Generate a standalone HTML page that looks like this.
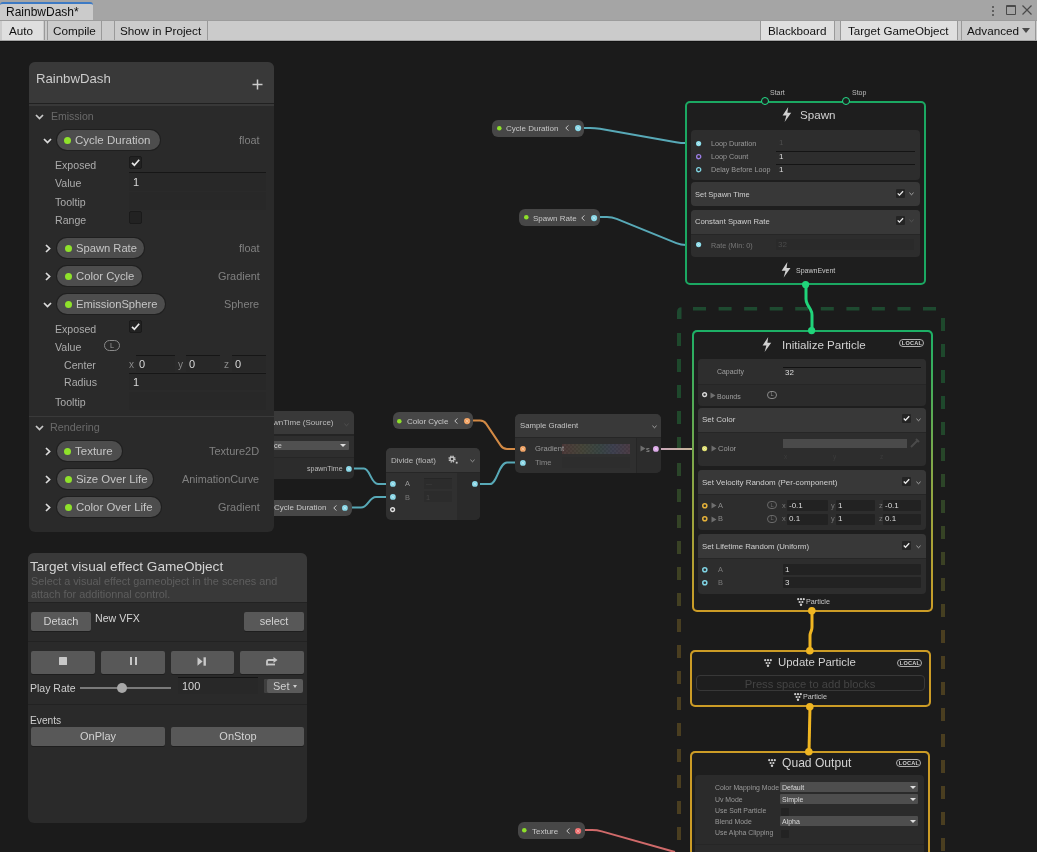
<!DOCTYPE html>
<html><head><meta charset="utf-8"><style>
*{box-sizing:border-box;margin:0;padding:0}
html,body{width:1037px;height:852px;overflow:hidden;background:#1b1b1b;font-family:"Liberation Sans",sans-serif;position:relative}
.a{position:absolute}
.t{position:absolute;white-space:nowrap;line-height:1;will-change:transform}
svg{position:absolute;overflow:visible}
</style></head><body>
<div class="a" style="left:0px;top:0px;width:1037px;height:20px;background:#a5a5a5;"></div>
<div class="a" style="left:0px;top:2px;width:93px;height:18px;background:#cbcbcb;border-radius:3px 3px 0 0;border-top:2px solid #3d7ac4"></div>
<div class="t" style="left:6.0px;top:5.8px;font-size:12px;color:#0d0d0d;">RainbwDash*</div>
<div class="a" style="left:0px;top:20px;width:1037px;height:1px;background:#9c9c9c;"></div>
<div class="a" style="left:0px;top:21px;width:1037px;height:19px;background:#cbcbcb;"></div>
<div class="a" style="left:0px;top:40px;width:1037px;height:1px;background:#a4a4a4;"></div>
<div class="a" style="left:0px;top:41px;width:1037px;height:1px;background:#121212;"></div>
<div class="a" style="left:2px;top:21px;width:41px;height:19px;background:#dfdfdf;"></div>
<div class="t" style="left:9.0px;top:24.6px;font-size:11.7px;color:#111;">Auto</div>
<div class="a" style="left:44px;top:21px;width:1px;height:19px;background:#999;"></div>
<div class="a" style="left:47px;top:21px;width:1px;height:19px;background:#999;"></div>
<div class="t" style="left:53.0px;top:24.6px;font-size:11.7px;color:#111;">Compile</div>
<div class="a" style="left:101px;top:21px;width:1px;height:19px;background:#999;"></div>
<div class="a" style="left:114px;top:21px;width:1px;height:19px;background:#999;"></div>
<div class="t" style="left:120.0px;top:24.6px;font-size:11.7px;color:#111;">Show in Project</div>
<div class="a" style="left:207px;top:21px;width:1px;height:19px;background:#999;"></div>
<div class="a" style="left:760px;top:21px;width:1px;height:19px;background:#999;"></div>
<div class="a" style="left:761px;top:21px;width:73px;height:19px;background:#dfdfdf;"></div>
<div class="t" style="left:768.0px;top:24.6px;font-size:11.7px;color:#111;">Blackboard</div>
<div class="a" style="left:834px;top:21px;width:1px;height:19px;background:#999;"></div>
<div class="a" style="left:840px;top:21px;width:1px;height:19px;background:#999;"></div>
<div class="a" style="left:841px;top:21px;width:116px;height:19px;background:#dfdfdf;"></div>
<div class="t" style="left:848.0px;top:24.7px;font-size:11.6px;color:#111;">Target GameObject</div>
<div class="a" style="left:957px;top:21px;width:1px;height:19px;background:#999;"></div>
<div class="a" style="left:961px;top:21px;width:1px;height:19px;background:#999;"></div>
<div class="t" style="left:967.0px;top:24.6px;font-size:11.7px;color:#111;">Advanced</div>
<div class="a" style="left:1022px;top:28px;width:0;height:0;border-left:4px solid transparent;border-right:4px solid transparent;border-top:5px solid #4a4a4a"></div>
<div class="a" style="left:1035px;top:21px;width:1px;height:19px;background:#999;"></div>
<div class="a" style="left:992.2px;top:5.6px;width:2px;height:2px;background:#4a4a4a;border-radius:1px"></div>
<div class="a" style="left:992.2px;top:9.8px;width:2px;height:2px;background:#4a4a4a;border-radius:1px"></div>
<div class="a" style="left:992.2px;top:14px;width:2px;height:2px;background:#4a4a4a;border-radius:1px"></div>
<div class="a" style="left:1006px;top:5.3px;width:9.6px;height:9.4px;border:1px solid #4a4a4a;border-top-width:2px;border-radius:1px"></div>
<svg style="left:1021px;top:4px" width="12" height="12"><path d="M1.5 1.5L10.5 10.5M10.5 1.5L1.5 10.5" stroke="#4a4a4a" stroke-width="1.2"/></svg>
<div class="a" style="left:0px;top:42px;width:1037px;height:810px;background:#1b1b1b;"></div>
<svg style="left:0;top:0" width="1037" height="852"><path d="M677 319 L677 312 Q677 307.3 681.5 307.3 L681.5 319 Z" fill="#1e4a30"/><rect x="677" y="333" width="4" height="13" fill="#1e482c"/><rect x="677" y="359" width="4" height="13" fill="#1e482c"/><rect x="677" y="385" width="4" height="13" fill="#1e482c"/><rect x="677" y="411" width="4" height="13" fill="#20482b"/><rect x="677" y="437" width="4" height="13" fill="#25462a"/><rect x="677" y="463" width="4" height="13" fill="#2a4529"/><rect x="677" y="489" width="4" height="13" fill="#2f4427"/><rect x="677" y="515" width="4" height="13" fill="#344326"/><rect x="677" y="541" width="4" height="13" fill="#394225"/><rect x="677" y="567" width="4" height="13" fill="#3e4123"/><rect x="677" y="593" width="4" height="13" fill="#434022"/><rect x="677" y="619" width="4" height="13" fill="#483e21"/><rect x="677" y="645" width="4" height="13" fill="#4a3e20"/><rect x="677" y="671" width="4" height="13" fill="#4a3e20"/><rect x="677" y="697" width="4" height="13" fill="#4a3e20"/><rect x="677" y="723" width="4" height="13" fill="#4a3e20"/><rect x="677" y="749" width="4" height="13" fill="#4a3e20"/><rect x="677" y="775" width="4" height="13" fill="#4a3e20"/><rect x="677" y="801" width="4" height="13" fill="#4a3e20"/><rect x="677" y="827" width="4" height="13" fill="#4a3e20"/><rect x="693.0" y="307" width="13" height="3.5" fill="#1e4a30"/><rect x="718.6" y="307" width="13" height="3.5" fill="#1e4a30"/><rect x="744.1" y="307" width="13" height="3.5" fill="#1e4a30"/><rect x="769.7" y="307" width="13" height="3.5" fill="#1e4a30"/><rect x="795.2" y="307" width="13" height="3.5" fill="#1e4a30"/><rect x="820.8" y="307" width="13" height="3.5" fill="#1e4a30"/><rect x="846.4" y="307" width="13" height="3.5" fill="#1e4a30"/><rect x="871.9" y="307" width="13" height="3.5" fill="#1e4a30"/><rect x="897.5" y="307" width="13" height="3.5" fill="#1e4a30"/><rect x="923.0" y="307" width="13" height="3.5" fill="#1e4a30"/><rect x="941" y="318" width="4" height="13" fill="#1e482c"/><rect x="941" y="344" width="4" height="13" fill="#1e482c"/><rect x="941" y="370" width="4" height="13" fill="#1e482c"/><rect x="941" y="396" width="4" height="13" fill="#1e482c"/><rect x="941" y="422" width="4" height="13" fill="#22472b"/><rect x="941" y="448" width="4" height="13" fill="#274629"/><rect x="941" y="474" width="4" height="13" fill="#2c4528"/><rect x="941" y="500" width="4" height="13" fill="#314427"/><rect x="941" y="526" width="4" height="13" fill="#364325"/><rect x="941" y="552" width="4" height="13" fill="#3b4124"/><rect x="941" y="578" width="4" height="13" fill="#404023"/><rect x="941" y="604" width="4" height="13" fill="#453f21"/><rect x="941" y="630" width="4" height="13" fill="#4a3e20"/><rect x="941" y="656" width="4" height="13" fill="#4a3e20"/><rect x="941" y="682" width="4" height="13" fill="#4a3e20"/><rect x="941" y="708" width="4" height="13" fill="#4a3e20"/><rect x="941" y="734" width="4" height="13" fill="#4a3e20"/><rect x="941" y="760" width="4" height="13" fill="#4a3e20"/><rect x="941" y="786" width="4" height="13" fill="#4a3e20"/><rect x="941" y="812" width="4" height="13" fill="#4a3e20"/><rect x="941" y="838" width="4" height="13" fill="#4a3e20"/><path d="M581 128 L590.00 128.00 Q595 128 599.93 128.86 L676.07 142.14 Q681 143 686.00 143.00 L699 143" fill="none" stroke="#58a9b7" stroke-width="2" stroke-linejoin="round"/><path d="M596 217 L607.00 217.00 Q612 217 616.63 218.88 L676.37 243.12 Q681 245 686.00 245.00 L699 245" fill="none" stroke="#58a9b7" stroke-width="2" stroke-linejoin="round"/><path d="M351 468.6 L364 468.6 C370 468.6 371 484 378 484 L393 484" fill="none" stroke="#58a9b7" stroke-width="2" stroke-linejoin="round"/><path d="M348 507.6 L361 507.6 C368 507.6 369 497 376 497 L393 497" fill="none" stroke="#58a9b7" stroke-width="2" stroke-linejoin="round"/><path d="M470 420.5 L480.00 420.50 Q484 420.5 486.22 423.83 L500.78 445.67 Q503 449 507.00 449.00 L523 449" fill="none" stroke="#d38a45" stroke-width="2" stroke-linejoin="round"/><path d="M478 484 L490 484 C497 484 499 462.5 507 462.5 L523 462.5" fill="none" stroke="#58a9b7" stroke-width="2" stroke-linejoin="round"/><defs><linearGradient id="pg" x1="0" x2="1"><stop offset="0" stop-color="#c9a6bb"/><stop offset="1" stop-color="#c8bd8c"/></linearGradient></defs><rect x="659" y="448" width="47" height="2" fill="url(#pg)"/><path d="M806 284 L806.00 299.00 Q806 302 807.54 304.57 L810.46 309.43 Q812 312 812.00 315.00 L812 331" fill="none" stroke="#20d47a" stroke-width="3" stroke-linejoin="round"/><path d="M812 611 L812.00 627.00 Q812 629 811.26 630.86 L810.74 632.14 Q810 634 810.00 636.00 L810 651" fill="none" stroke="#f0b622" stroke-width="3" stroke-linejoin="round"/><path d="M810 706 L809 752" fill="none" stroke="#f0b622" stroke-width="3" stroke-linejoin="round"/><path d="M581 830 L592.00 830.00 Q597 830 601.81 831.36 L675 852" fill="none" stroke="#d06a6a" stroke-width="2" stroke-linejoin="round"/></svg>
<div class="a" style="left:492px;top:119.5px;width:92.29999999999995px;height:17px;background:#474747;border-radius:6px"></div>
<svg style="left:495.70px;top:124.80px" width="6.60" height="6.60"><circle cx="3.30" cy="3.30" r="2.30" fill="#8ee02a"/></svg>
<div class="t" style="left:506.0px;top:125.0px;font-size:8px;color:#c8c8c8;">Cycle Duration</div>
<svg style="left:565.3px;top:125.1px" width="4" height="6" viewBox="0 0 4 6"><path d="M3.4 0.4 L0.8 3 L3.4 5.6" fill="none" stroke="#c8c8c8" stroke-width="1"/></svg>
<svg style="left:573.90px;top:124.00px" width="8.20" height="8.20"><circle cx="4.10" cy="4.10" r="3.10" fill="#86d6e6"/><path d="M2.39 2.39 L5.80 5.80 M5.80 2.39 L2.39 5.80" stroke="rgba(255,255,255,.4)" stroke-width="0.9"/></svg>
<div class="a" style="left:519px;top:209px;width:81.20000000000005px;height:17px;background:#474747;border-radius:6px"></div>
<svg style="left:522.70px;top:214.30px" width="6.60" height="6.60"><circle cx="3.30" cy="3.30" r="2.30" fill="#8ee02a"/></svg>
<div class="t" style="left:533.0px;top:214.5px;font-size:8px;color:#c8c8c8;">Spawn Rate</div>
<svg style="left:581.2px;top:214.6px" width="4" height="6" viewBox="0 0 4 6"><path d="M3.4 0.4 L0.8 3 L3.4 5.6" fill="none" stroke="#c8c8c8" stroke-width="1"/></svg>
<svg style="left:589.80px;top:213.50px" width="8.20" height="8.20"><circle cx="4.10" cy="4.10" r="3.10" fill="#86d6e6"/><path d="M2.39 2.39 L5.80 5.80 M5.80 2.39 L2.39 5.80" stroke="rgba(255,255,255,.4)" stroke-width="0.9"/></svg>
<div class="a" style="left:392.6px;top:412.4px;width:80.59999999999997px;height:17px;background:#474747;border-radius:6px"></div>
<svg style="left:396.30px;top:417.70px" width="6.60" height="6.60"><circle cx="3.30" cy="3.30" r="2.30" fill="#8ee02a"/></svg>
<div class="t" style="left:406.6px;top:417.9px;font-size:8px;color:#c8c8c8;">Color Cycle</div>
<svg style="left:454.2px;top:418.0px" width="4" height="6" viewBox="0 0 4 6"><path d="M3.4 0.4 L0.8 3 L3.4 5.6" fill="none" stroke="#c8c8c8" stroke-width="1"/></svg>
<svg style="left:462.80px;top:416.90px" width="8.20" height="8.20"><circle cx="4.10" cy="4.10" r="3.10" fill="#f0a060"/><path d="M2.39 2.39 L5.80 5.80 M5.80 2.39 L2.39 5.80" stroke="rgba(255,255,255,.4)" stroke-width="0.9"/></svg>
<div class="a" style="left:517.7px;top:822px;width:66.89999999999998px;height:17px;background:#474747;border-radius:6px"></div>
<svg style="left:521.40px;top:827.30px" width="6.60" height="6.60"><circle cx="3.30" cy="3.30" r="2.30" fill="#8ee02a"/></svg>
<div class="t" style="left:531.7px;top:827.5px;font-size:8px;color:#c8c8c8;">Texture</div>
<svg style="left:565.6px;top:827.6px" width="4" height="6" viewBox="0 0 4 6"><path d="M3.4 0.4 L0.8 3 L3.4 5.6" fill="none" stroke="#c8c8c8" stroke-width="1"/></svg>
<svg style="left:574.20px;top:826.50px" width="8.20" height="8.20"><circle cx="4.10" cy="4.10" r="3.10" fill="#f07070"/><path d="M2.39 2.39 L5.80 5.80 M5.80 2.39 L2.39 5.80" stroke="rgba(255,255,255,.4)" stroke-width="0.9"/></svg>
<div class="a" style="left:685px;top:101px;width:241px;height:184px;border:2px solid #1ba862;border-radius:5px;background:#1e1e1e"></div>
<div class="a" style="left:760.6px;top:97.1px;width:8.4px;height:8.4px;border-radius:50%;border:1.7px solid #22e08a;background:#1e1e1e"></div>
<div class="a" style="left:842px;top:97.1px;width:8.4px;height:8.4px;border-radius:50%;border:1.7px solid #22e08a;background:#1e1e1e"></div>
<div class="t" style="left:770.0px;top:88.7px;font-size:7px;color:#bdbdbd;">Start</div>
<div class="t" style="left:852.0px;top:88.7px;font-size:7px;color:#bdbdbd;">Stop</div>
<svg style="left:781.5px;top:107px" width="10.0" height="15" viewBox="0 0 10 15"><path d="M6.2 0 L0.6 8.4 L4.4 8.4 L2.6 15 L9.2 5.8 L5.4 5.8 Z" fill="#d0d0d0"/></svg>
<div class="t" style="left:800.3px;top:109.4px;font-size:11.6px;color:#d2d2d2;">Spawn</div>
<div class="a" style="left:691px;top:129.5px;width:229px;height:50px;background:#2d2d2d;border-radius:4px"></div>
<svg style="left:695.40px;top:139.60px" width="7.20" height="7.20"><circle cx="3.60" cy="3.60" r="2.60" fill="#8adcea"/><path d="M2.17 2.17 L5.03 5.03 M5.03 2.17 L2.17 5.03" stroke="rgba(255,255,255,.4)" stroke-width="0.9"/></svg>
<svg style="left:695.30px;top:152.60px" width="7.40" height="7.40"><circle cx="3.70" cy="3.70" r="2.05" fill="none" stroke="#9c7ee6" stroke-width="1.3"/></svg>
<svg style="left:695.30px;top:165.80px" width="7.40" height="7.40"><circle cx="3.70" cy="3.70" r="2.05" fill="none" stroke="#7fd2e0" stroke-width="1.3"/></svg>
<div class="t" style="left:711.0px;top:140.3px;font-size:7.2px;color:#9a9a9a;">Loop Duration</div>
<div class="t" style="left:711.0px;top:152.5px;font-size:7.2px;color:#9a9a9a;">Loop Count</div>
<div class="t" style="left:711.0px;top:165.7px;font-size:7.2px;color:#9a9a9a;">Delay Before Loop</div>
<div class="t" style="left:779.0px;top:139.4px;font-size:8px;color:#4d4d4d;">1</div>
<div class="a" style="left:776px;top:151px;width:139px;height:1px;background:#141414;"></div>
<div class="a" style="left:776px;top:164.4px;width:139px;height:1px;background:#141414;"></div>
<div class="t" style="left:779.0px;top:152.6px;font-size:8px;color:#dcdcdc;">1</div>
<div class="t" style="left:779.0px;top:165.8px;font-size:8px;color:#dcdcdc;">1</div>
<div class="a" style="left:691px;top:182.3px;width:229px;height:23.5px;background:#383838;border-radius:4px"></div>
<div class="t" style="left:694.5px;top:191.0px;font-size:7.5px;color:#cfcfcf;">Set Spawn Time</div>
<div class="a" style="left:896px;top:189.3px;width:8.6px;height:8.6px;background:#242424;border-radius:1px"></div>
<svg style="left:896px;top:189.3px" width="8.6" height="8.6" viewBox="0 0 9 9"><path d="M1.8 4.6 L3.6 6.4 L7.4 2.4" fill="none" stroke="#e8e8e8" stroke-width="1.4"/></svg>
<svg style="left:909px;top:191.5px" width="5" height="3.5" viewBox="0 0 6 4"><path d="M0.5 0.8 L3 3.2 L5.5 0.8" fill="none" stroke="#bdbdbd" stroke-width="1"/></svg>
<div class="a" style="left:691px;top:209.8px;width:229px;height:47px;background:#2d2d2d;border-radius:4px;overflow:hidden"></div>
<div class="a" style="left:691px;top:209.8px;width:229px;height:23.8px;background:#383838;border-radius:4px 4px 0 0"></div>
<div class="a" style="left:691px;top:233.6px;width:229px;height:1.2px;background:#262626;"></div>
<div class="t" style="left:694.5px;top:217.9px;font-size:7.7px;color:#cfcfcf;">Constant Spawn Rate</div>
<div class="a" style="left:896px;top:216.4px;width:8.6px;height:8.6px;background:#242424;border-radius:1px"></div>
<svg style="left:896px;top:216.4px" width="8.6" height="8.6" viewBox="0 0 9 9"><path d="M1.8 4.6 L3.6 6.4 L7.4 2.4" fill="none" stroke="#e8e8e8" stroke-width="1.4"/></svg>
<svg style="left:909px;top:218.8px" width="5" height="3.5" viewBox="0 0 6 4"><path d="M0.5 0.8 L3 3.2 L5.5 0.8" fill="none" stroke="#5a5a5a" stroke-width="1"/></svg>
<svg style="left:695.40px;top:241.40px" width="7.20" height="7.20"><circle cx="3.60" cy="3.60" r="2.60" fill="#8adcea"/><path d="M2.17 2.17 L5.03 5.03 M5.03 2.17 L2.17 5.03" stroke="rgba(255,255,255,.4)" stroke-width="0.9"/></svg>
<div class="t" style="left:711.0px;top:242.1px;font-size:7.2px;color:#777;">Rate (Min: 0)</div>
<div class="a" style="left:776.4px;top:238.9px;width:137.6px;height:11.4px;background:#2a2a2a;"></div>
<div class="t" style="left:778.0px;top:241.2px;font-size:8px;color:#4a4a4a;">32</div>
<svg style="left:780.5px;top:262px" width="10.3" height="15.5" viewBox="0 0 10 15"><path d="M6.2 0 L0.6 8.4 L4.4 8.4 L2.6 15 L9.2 5.8 L5.4 5.8 Z" fill="#d0d0d0"/></svg>
<div class="t" style="left:795.7px;top:266.5px;font-size:7.0px;color:#c8c8c8;">SpawnEvent</div>
<svg style="left:801.00px;top:279.70px" width="9.20" height="9.20"><circle cx="4.60" cy="4.60" r="3.60" fill="#20d47a"/></svg>
<div class="a" style="left:691.8px;top:330.2px;width:240.80000000000007px;height:281.8px;border-radius:5px;background:linear-gradient(#1cb066 0%, #85a848 50%, #cc9c26 100%)"></div>
<div class="a" style="left:693.8px;top:332.2px;width:236.80000000000007px;height:277.8px;border-radius:3.5px;background:#1e1e1e"></div>
<svg style="left:807.40px;top:326.40px" width="9.20" height="9.20"><circle cx="4.60" cy="4.60" r="3.60" fill="#20d47a"/></svg>
<svg style="left:762px;top:336.5px" width="10.0" height="15" viewBox="0 0 10 15"><path d="M6.2 0 L0.6 8.4 L4.4 8.4 L2.6 15 L9.2 5.8 L5.4 5.8 Z" fill="#d0d0d0"/></svg>
<div class="t" style="left:782.0px;top:339.4px;font-size:11.6px;color:#d2d2d2;">Initialize Particle</div>
<div class="a" style="left:899px;top:338.8px;width:25px;height:8px;border:1px solid #b0b0b0;border-radius:4px"></div>
<div class="t" style="left:611.5px;width:600px;text-align:center;top:340.7px;font-size:5.6px;color:#d0d0d0;font-weight:bold;letter-spacing:0.2px">LOCAL</div>
<div class="a" style="left:698px;top:359px;width:228px;height:46.6px;background:#2b2b2b;border-radius:4px;overflow:hidden"></div>
<div class="a" style="left:698px;top:359px;width:228px;height:25px;background:#2e2e2e;border-radius:4px 4px 0 0"></div>
<div class="a" style="left:698px;top:384px;width:228px;height:1px;background:#262626;"></div>
<div class="t" style="left:717.0px;top:369.3px;font-size:6.95px;color:#a0a0a0;">Capacity</div>
<div class="a" style="left:783px;top:367px;width:138px;height:1px;background:#121212;"></div>
<div class="t" style="left:784.5px;top:368.8px;font-size:8px;color:#dcdcdc;">32</div>
<svg style="left:701.40px;top:391.40px" width="7.20" height="7.20"><circle cx="3.60" cy="3.60" r="1.90" fill="none" stroke="#d8d8d8" stroke-width="1.4"/></svg>
<svg style="left:710px;top:391.5px" width="6" height="7" viewBox="0 0 6 7"><path d="M0.5 0.5 L5.5 3.5 L0.5 6.5 Z" fill="#6f6f6f"/></svg>
<div class="t" style="left:717.0px;top:392.5px;font-size:7.0px;color:#a0a0a0;">Bounds</div>
<div class="a" style="left:767px;top:390.8px;width:10px;height:8.2px;border:1px solid #8a8a8a;border-radius:4.1px"></div>
<div class="t" style="left:472.1px;width:600px;text-align:center;top:392.4px;font-size:5.8px;color:#8a8a8a;">L</div>
<div class="a" style="left:698px;top:408px;width:228px;height:58px;background:#2d2d2d;border-radius:4px;overflow:hidden"></div>
<div class="a" style="left:698px;top:408px;width:228px;height:24px;background:#383838;border-radius:4px 4px 0 0"></div>
<div class="a" style="left:698px;top:432px;width:228px;height:1px;background:#262626;"></div>
<div class="t" style="left:702.0px;top:416.2px;font-size:8px;color:#cfcfcf;">Set Color</div>
<div class="a" style="left:902px;top:414px;width:8.8px;height:8.8px;background:#242424;border-radius:1px"></div>
<svg style="left:902px;top:414px" width="8.8" height="8.8" viewBox="0 0 9 9"><path d="M1.8 4.6 L3.6 6.4 L7.4 2.4" fill="none" stroke="#e8e8e8" stroke-width="1.4"/></svg>
<svg style="left:915.5px;top:417.5px" width="5" height="3.5" viewBox="0 0 6 4"><path d="M0.5 0.8 L3 3.2 L5.5 0.8" fill="none" stroke="#bdbdbd" stroke-width="1"/></svg>
<svg style="left:701.40px;top:444.90px" width="7.20" height="7.20"><circle cx="3.60" cy="3.60" r="2.60" fill="#e0e070"/><path d="M2.17 2.17 L5.03 5.03 M5.03 2.17 L2.17 5.03" stroke="rgba(255,255,255,.4)" stroke-width="0.9"/></svg>
<svg style="left:711px;top:445.0px" width="6" height="7" viewBox="0 0 6 7"><path d="M0.5 0.5 L5.5 3.5 L0.5 6.5 Z" fill="#6f6f6f"/></svg>
<div class="t" style="left:718.0px;top:444.9px;font-size:7.6px;color:#9a9a9a;">Color</div>
<div class="a" style="left:783px;top:439px;width:124px;height:8.5px;background:#4a4a4a;"></div>
<svg style="left:909px;top:437px" width="12" height="12"><path d="M2 10 L8 4 M7 2 L10 5" stroke="#4a4a4a" stroke-width="2"/></svg>
<div class="t" style="left:784.0px;top:453.5px;font-size:6.5px;color:#3c3c3c;">x</div>
<div class="t" style="left:833.0px;top:453.5px;font-size:6.5px;color:#3c3c3c;">y</div>
<div class="t" style="left:880.0px;top:453.5px;font-size:6.5px;color:#3c3c3c;">z</div>
<div class="a" style="left:698px;top:470px;width:228px;height:60.4px;background:#2d2d2d;border-radius:4px;overflow:hidden"></div>
<div class="a" style="left:698px;top:470px;width:228px;height:24.2px;background:#383838;border-radius:4px 4px 0 0"></div>
<div class="a" style="left:698px;top:494.2px;width:228px;height:1px;background:#262626;"></div>
<div class="t" style="left:702.0px;top:479.3px;font-size:7.94px;color:#cfcfcf;">Set Velocity Random (Per-component)</div>
<div class="a" style="left:902px;top:477px;width:8.8px;height:8.8px;background:#242424;border-radius:1px"></div>
<svg style="left:902px;top:477px" width="8.8" height="8.8" viewBox="0 0 9 9"><path d="M1.8 4.6 L3.6 6.4 L7.4 2.4" fill="none" stroke="#e8e8e8" stroke-width="1.4"/></svg>
<svg style="left:915.5px;top:480.5px" width="5" height="3.5" viewBox="0 0 6 4"><path d="M0.5 0.8 L3 3.2 L5.5 0.8" fill="none" stroke="#bdbdbd" stroke-width="1"/></svg>
<svg style="left:701.20px;top:501.70px" width="7.60" height="7.60"><circle cx="3.80" cy="3.80" r="2.05" fill="none" stroke="#e6b23a" stroke-width="1.5"/></svg>
<svg style="left:711px;top:502.0px" width="6" height="7" viewBox="0 0 6 7"><path d="M0.5 0.5 L5.5 3.5 L0.5 6.5 Z" fill="#6f6f6f"/></svg>
<div class="t" style="left:718.0px;top:501.9px;font-size:7.4px;color:#8a8a8a;">A</div>
<div class="a" style="left:767px;top:501.1px;width:10px;height:8.2px;border:1px solid #6a6a6a;border-radius:4.1px"></div>
<div class="t" style="left:472.1px;width:600px;text-align:center;top:502.7px;font-size:5.8px;color:#6a6a6a;">L</div>
<div class="a" style="left:787px;top:500.0px;width:41px;height:11px;background:#222222;border-radius:1px"></div>
<div class="t" style="left:781.5px;top:501.9px;font-size:7.4px;color:#777;">x</div>
<div class="t" style="left:789.0px;top:501.7px;font-size:8px;color:#dcdcdc;">-0.1</div>
<div class="a" style="left:836px;top:500.0px;width:39px;height:11px;background:#222222;border-radius:1px"></div>
<div class="t" style="left:831.0px;top:501.9px;font-size:7.4px;color:#777;">y</div>
<div class="t" style="left:838.0px;top:501.7px;font-size:8px;color:#dcdcdc;">1</div>
<div class="a" style="left:883px;top:500.0px;width:38px;height:11px;background:#222222;border-radius:1px"></div>
<div class="t" style="left:878.5px;top:501.9px;font-size:7.4px;color:#777;">z</div>
<div class="t" style="left:885.0px;top:501.7px;font-size:8px;color:#dcdcdc;">-0.1</div>
<svg style="left:701.20px;top:515.20px" width="7.60" height="7.60"><circle cx="3.80" cy="3.80" r="2.05" fill="none" stroke="#e6b23a" stroke-width="1.5"/></svg>
<svg style="left:711px;top:515.5px" width="6" height="7" viewBox="0 0 6 7"><path d="M0.5 0.5 L5.5 3.5 L0.5 6.5 Z" fill="#6f6f6f"/></svg>
<div class="t" style="left:718.0px;top:515.4px;font-size:7.4px;color:#8a8a8a;">B</div>
<div class="a" style="left:767px;top:514.5999999999999px;width:10px;height:8.2px;border:1px solid #6a6a6a;border-radius:4.1px"></div>
<div class="t" style="left:472.1px;width:600px;text-align:center;top:516.2px;font-size:5.8px;color:#6a6a6a;">L</div>
<div class="a" style="left:787px;top:513.5px;width:41px;height:11px;background:#222222;border-radius:1px"></div>
<div class="t" style="left:781.5px;top:515.4px;font-size:7.4px;color:#777;">x</div>
<div class="t" style="left:789.0px;top:515.2px;font-size:8px;color:#dcdcdc;">0.1</div>
<div class="a" style="left:836px;top:513.5px;width:39px;height:11px;background:#222222;border-radius:1px"></div>
<div class="t" style="left:831.0px;top:515.4px;font-size:7.4px;color:#777;">y</div>
<div class="t" style="left:838.0px;top:515.2px;font-size:8px;color:#dcdcdc;">1</div>
<div class="a" style="left:883px;top:513.5px;width:38px;height:11px;background:#222222;border-radius:1px"></div>
<div class="t" style="left:878.5px;top:515.4px;font-size:7.4px;color:#777;">z</div>
<div class="t" style="left:885.0px;top:515.2px;font-size:8px;color:#dcdcdc;">0.1</div>
<div class="a" style="left:698px;top:534px;width:228px;height:59.8px;background:#2d2d2d;border-radius:4px;overflow:hidden"></div>
<div class="a" style="left:698px;top:534px;width:228px;height:24px;background:#383838;border-radius:4px 4px 0 0"></div>
<div class="a" style="left:698px;top:558px;width:228px;height:1px;background:#262626;"></div>
<div class="t" style="left:702.0px;top:543.4px;font-size:7.77px;color:#cfcfcf;">Set Lifetime Random (Uniform)</div>
<div class="a" style="left:902px;top:541px;width:8.8px;height:8.8px;background:#242424;border-radius:1px"></div>
<svg style="left:902px;top:541px" width="8.8" height="8.8" viewBox="0 0 9 9"><path d="M1.8 4.6 L3.6 6.4 L7.4 2.4" fill="none" stroke="#e8e8e8" stroke-width="1.4"/></svg>
<svg style="left:915.5px;top:544.5px" width="5" height="3.5" viewBox="0 0 6 4"><path d="M0.5 0.8 L3 3.2 L5.5 0.8" fill="none" stroke="#bdbdbd" stroke-width="1"/></svg>
<svg style="left:701.20px;top:565.70px" width="7.60" height="7.60"><circle cx="3.80" cy="3.80" r="2.05" fill="none" stroke="#80d4e4" stroke-width="1.5"/></svg>
<div class="t" style="left:718.0px;top:565.9px;font-size:7.4px;color:#7a7a7a;">A</div>
<div class="a" style="left:783px;top:563.5px;width:138px;height:11.5px;background:#222222;border-radius:1px"></div>
<div class="t" style="left:785.0px;top:565.7px;font-size:8px;color:#dcdcdc;">1</div>
<svg style="left:701.20px;top:578.70px" width="7.60" height="7.60"><circle cx="3.80" cy="3.80" r="2.05" fill="none" stroke="#80d4e4" stroke-width="1.5"/></svg>
<div class="t" style="left:718.0px;top:578.9px;font-size:7.4px;color:#7a7a7a;">B</div>
<div class="a" style="left:783px;top:576.5px;width:138px;height:11.5px;background:#222222;border-radius:1px"></div>
<div class="t" style="left:785.0px;top:578.7px;font-size:8px;color:#dcdcdc;">3</div>
<svg style="left:797px;top:598px" width="8" height="8" viewBox="0 0 8 8"><circle cx="1.2" cy="1.2" r="1.1" fill="#d0d0d0"/><circle cx="4" cy="1.2" r="1.1" fill="#d0d0d0"/><circle cx="6.8" cy="1.2" r="1.1" fill="#d0d0d0"/><circle cx="2.6" cy="4" r="1.1" fill="#d0d0d0"/><circle cx="5.4" cy="4" r="1.1" fill="#d0d0d0"/><circle cx="4" cy="6.8" r="1.2" fill="#d0d0d0"/></svg>
<div class="t" style="left:806.0px;top:598.2px;font-size:7.2px;color:#c8c8c8;">Particle</div>
<svg style="left:807.20px;top:606.20px" width="9.60" height="9.60"><circle cx="4.80" cy="4.80" r="3.80" fill="#f0b622"/></svg>
<div class="a" style="left:690px;top:650.2px;width:240.79999999999995px;height:56.89999999999998px;border-radius:5px;background:#cc9c26"></div>
<div class="a" style="left:692px;top:652.2px;width:236.79999999999995px;height:52.89999999999998px;border-radius:3.5px;background:#1e1e1e"></div>
<svg style="left:805.20px;top:646.40px" width="9.60" height="9.60"><circle cx="4.80" cy="4.80" r="3.80" fill="#f0b622"/></svg>
<svg style="left:764px;top:659px" width="8" height="8" viewBox="0 0 8 8"><circle cx="1.2" cy="1.2" r="1.1" fill="#d0d0d0"/><circle cx="4" cy="1.2" r="1.1" fill="#d0d0d0"/><circle cx="6.8" cy="1.2" r="1.1" fill="#d0d0d0"/><circle cx="2.6" cy="4" r="1.1" fill="#d0d0d0"/><circle cx="5.4" cy="4" r="1.1" fill="#d0d0d0"/><circle cx="4" cy="6.8" r="1.2" fill="#d0d0d0"/></svg>
<div class="t" style="left:777.8px;top:656.6px;font-size:11.4px;color:#d2d2d2;">Update Particle</div>
<div class="a" style="left:897px;top:659px;width:25px;height:8px;border:1px solid #b0b0b0;border-radius:4px"></div>
<div class="t" style="left:609.5px;width:600px;text-align:center;top:660.9px;font-size:5.6px;color:#d0d0d0;font-weight:bold;letter-spacing:0.2px">LOCAL</div>
<div class="a" style="left:695.5px;top:675px;width:229px;height:15.5px;border:1px solid #383838;border-radius:4px"></div>
<div class="t" style="left:510.0px;width:600px;text-align:center;top:678.5px;font-size:11.2px;color:#444;">Press space to add blocks</div>
<svg style="left:794px;top:692.5px" width="8" height="8" viewBox="0 0 8 8"><circle cx="1.2" cy="1.2" r="1.1" fill="#d0d0d0"/><circle cx="4" cy="1.2" r="1.1" fill="#d0d0d0"/><circle cx="6.8" cy="1.2" r="1.1" fill="#d0d0d0"/><circle cx="2.6" cy="4" r="1.1" fill="#d0d0d0"/><circle cx="5.4" cy="4" r="1.1" fill="#d0d0d0"/><circle cx="4" cy="6.8" r="1.2" fill="#d0d0d0"/></svg>
<div class="t" style="left:802.5px;top:693.2px;font-size:7.2px;color:#c8c8c8;">Particle</div>
<svg style="left:805.20px;top:701.70px" width="9.60" height="9.60"><circle cx="4.80" cy="4.80" r="3.80" fill="#f0b622"/></svg>
<div class="a" style="left:689.5px;top:750.9px;width:240.5px;height:149.10000000000002px;border-radius:5px;background:#cc9c26"></div>
<div class="a" style="left:691.5px;top:752.9px;width:236.5px;height:145.10000000000002px;border-radius:3.5px;background:#1e1e1e"></div>
<svg style="left:804.20px;top:747.10px" width="9.60" height="9.60"><circle cx="4.80" cy="4.80" r="3.80" fill="#f0b622"/></svg>
<svg style="left:768px;top:759px" width="8" height="8" viewBox="0 0 8 8"><circle cx="1.2" cy="1.2" r="1.1" fill="#d0d0d0"/><circle cx="4" cy="1.2" r="1.1" fill="#d0d0d0"/><circle cx="6.8" cy="1.2" r="1.1" fill="#d0d0d0"/><circle cx="2.6" cy="4" r="1.1" fill="#d0d0d0"/><circle cx="5.4" cy="4" r="1.1" fill="#d0d0d0"/><circle cx="4" cy="6.8" r="1.2" fill="#d0d0d0"/></svg>
<div class="t" style="left:782.3px;top:756.8px;font-size:12.1px;color:#d2d2d2;">Quad Output</div>
<div class="a" style="left:896px;top:759px;width:25px;height:8px;border:1px solid #b0b0b0;border-radius:4px"></div>
<div class="t" style="left:608.5px;width:600px;text-align:center;top:760.9px;font-size:5.6px;color:#d0d0d0;font-weight:bold;letter-spacing:0.2px">LOCAL</div>
<div class="a" style="left:695px;top:774.7px;width:229.3px;height:80px;background:#2b2b2b;border-radius:4px 4px 0 0"></div>
<div class="a" style="left:695px;top:843.5px;width:229.3px;height:1px;background:#262626;"></div>
<div class="t" style="left:715.0px;top:784.7px;font-size:6.9px;color:#9a9a9a;">Color Mapping Mode</div>
<div class="t" style="left:715.0px;top:796.7px;font-size:6.9px;color:#9a9a9a;">Uv Mode</div>
<div class="t" style="left:715.0px;top:807.7px;font-size:6.9px;color:#9a9a9a;">Use Soft Particle</div>
<div class="t" style="left:715.0px;top:818.7px;font-size:6.9px;color:#9a9a9a;">Blend Mode</div>
<div class="t" style="left:715.0px;top:829.7px;font-size:6.9px;color:#9a9a9a;">Use Alpha Clipping</div>
<div class="a" style="left:780.3px;top:782px;width:138px;height:9.5px;background:#4e4e4e;border-radius:1px"></div>
<div class="t" style="left:782.0px;top:783.7px;font-size:7px;color:#d8d8d8;">Default</div>
<div class="a" style="left:910px;top:785.5px;width:0;height:0;border-left:3px solid transparent;border-right:3px solid transparent;border-top:3.5px solid #ddd"></div>
<div class="a" style="left:780.3px;top:794px;width:138px;height:9.5px;background:#4e4e4e;border-radius:1px"></div>
<div class="t" style="left:782.0px;top:795.7px;font-size:7px;color:#d8d8d8;">Simple</div>
<div class="a" style="left:910px;top:797.5px;width:0;height:0;border-left:3px solid transparent;border-right:3px solid transparent;border-top:3.5px solid #ddd"></div>
<div class="a" style="left:780.3px;top:816px;width:138px;height:9.5px;background:#4e4e4e;border-radius:1px"></div>
<div class="t" style="left:782.0px;top:817.7px;font-size:7px;color:#d8d8d8;">Alpha</div>
<div class="a" style="left:910px;top:819.5px;width:0;height:0;border-left:3px solid transparent;border-right:3px solid transparent;border-top:3.5px solid #ddd"></div>
<div class="a" style="left:781px;top:808px;width:8px;height:8px;background:#232323;border-radius:1px"></div>
<div class="a" style="left:781px;top:830px;width:8px;height:8px;background:#232323;border-radius:1px"></div>
<div class="a" style="left:200px;top:411px;width:153.7px;height:68px;background:#2c2c2c;border-radius:5px;overflow:hidden"></div>
<div class="a" style="left:200px;top:411px;width:153.7px;height:23px;background:#393939;border-radius:5px 5px 0 0"></div>
<div class="a" style="left:200px;top:434px;width:153.7px;height:2px;background:#242424;"></div>
<div class="a" style="left:200px;top:436px;width:153.7px;height:21px;background:#2e2e2e;"></div>
<div class="a" style="left:200px;top:457px;width:153.7px;height:1px;background:#262626;"></div>
<div class="t" style="right:703.8px;top:419.2px;font-size:8.0px;color:#bcbcbc;">spawnTime (Source)</div>
<svg style="left:344px;top:422.5px" width="5" height="3.5" viewBox="0 0 6 4"><path d="M0.5 0.8 L3 3.2 L5.5 0.8" fill="none" stroke="#555" stroke-width="1"/></svg>
<div class="a" style="left:200px;top:440.8px;width:148.7px;height:9.4px;background:#505050;border-radius:1px"></div>
<div class="t" style="left:274.0px;top:441.9px;font-size:7.4px;color:#cfcfcf;">ce</div>
<div class="a" style="left:340px;top:444px;width:0;height:0;border-left:3px solid transparent;border-right:3px solid transparent;border-top:3.5px solid #ddd"></div>
<div class="t" style="right:694.8px;top:465.0px;font-size:7.0px;color:#bcbcbc;">spawnTime</div>
<svg style="left:344.70px;top:464.50px" width="7.80" height="7.80"><circle cx="3.90" cy="3.90" r="2.90" fill="#86d6e6"/><path d="M2.30 2.30 L5.50 5.50 M5.50 2.30 L2.30 5.50" stroke="rgba(255,255,255,.4)" stroke-width="0.9"/></svg>
<div class="a" style="left:240px;top:499.5px;width:111.7px;height:16.2px;background:#474747;border-radius:6px"></div>
<div class="t" style="right:711.0px;top:504.4px;font-size:8px;color:#c8c8c8;">Cycle Duration</div>
<svg style="left:333px;top:504.5px" width="4" height="6" viewBox="0 0 4 6"><path d="M3.4 0.4 L0.8 3 L3.4 5.6" fill="none" stroke="#c8c8c8" stroke-width="1"/></svg>
<svg style="left:340.80px;top:503.70px" width="7.80" height="7.80"><circle cx="3.90" cy="3.90" r="2.90" fill="#86d6e6"/><path d="M2.30 2.30 L5.50 5.50 M5.50 2.30 L2.30 5.50" stroke="rgba(255,255,255,.4)" stroke-width="0.9"/></svg>
<div class="a" style="left:385.8px;top:448px;width:94.1px;height:72px;background:#303030;border-radius:5px;overflow:hidden"></div>
<div class="a" style="left:385.8px;top:448px;width:94.1px;height:23.8px;background:#393939;border-radius:5px 5px 0 0"></div>
<div class="a" style="left:385.8px;top:471.8px;width:94.1px;height:1.2px;background:#262626;"></div>
<div class="a" style="left:457px;top:473px;width:22.9px;height:47px;background:#2a2a2a;border-radius:0 0 5px 0"></div>
<div class="t" style="left:391.1px;top:456.8px;font-size:8.0px;color:#bcbcbc;">Divide (float)</div>
<svg style="left:448px;top:454.5px" width="10" height="9" viewBox="0 0 10 9"><circle cx="4" cy="4" r="2.9" fill="none" stroke="#c8c8c8" stroke-width="1.5" stroke-dasharray="1.3 1"/><circle cx="4" cy="4" r="1.9" fill="none" stroke="#c8c8c8" stroke-width="1.1"/><rect x="7.8" y="6.8" width="1.8" height="1.8" fill="#c8c8c8"/></svg>
<svg style="left:470px;top:459px" width="5" height="3.5" viewBox="0 0 6 4"><path d="M0.5 0.8 L3 3.2 L5.5 0.8" fill="none" stroke="#aaa" stroke-width="1"/></svg>
<svg style="left:389.10px;top:479.60px" width="7.80" height="7.80"><circle cx="3.90" cy="3.90" r="2.90" fill="#86d6e6"/><path d="M2.30 2.30 L5.50 5.50 M5.50 2.30 L2.30 5.50" stroke="rgba(255,255,255,.4)" stroke-width="0.9"/></svg>
<svg style="left:389.10px;top:493.10px" width="7.80" height="7.80"><circle cx="3.90" cy="3.90" r="2.90" fill="#86d6e6"/><path d="M2.30 2.30 L5.50 5.50 M5.50 2.30 L2.30 5.50" stroke="rgba(255,255,255,.4)" stroke-width="0.9"/></svg>
<svg style="left:389.40px;top:506.40px" width="7.20" height="7.20"><circle cx="3.60" cy="3.60" r="1.90" fill="none" stroke="#e0e0e0" stroke-width="1.4"/></svg>
<div class="t" style="left:405.0px;top:480.3px;font-size:7.4px;color:#9a9a9a;">A</div>
<div class="t" style="left:405.0px;top:493.9px;font-size:7.4px;color:#7a7a7a;">B</div>
<div class="a" style="left:424px;top:478px;width:28px;height:11.3px;background:#2c2c2c;"></div>
<div class="a" style="left:424px;top:478px;width:28px;height:1px;background:#262626;"></div>
<div class="a" style="left:424px;top:491px;width:28px;height:11.3px;background:#2c2c2c;"></div>
<div class="t" style="left:426.0px;top:481.4px;font-size:6px;color:#444;">—</div>
<div class="t" style="left:426.0px;top:493.7px;font-size:7.4px;color:#444;">1</div>
<svg style="left:470.80px;top:479.90px" width="7.80" height="7.80"><circle cx="3.90" cy="3.90" r="2.90" fill="#86d6e6"/><path d="M2.30 2.30 L5.50 5.50 M5.50 2.30 L2.30 5.50" stroke="rgba(255,255,255,.4)" stroke-width="0.9"/></svg>
<div class="a" style="left:515px;top:413.5px;width:146px;height:59px;background:#2f2f2f;border-radius:5px;overflow:hidden"></div>
<div class="a" style="left:515px;top:413.5px;width:146px;height:23.3px;background:#393939;border-radius:5px 5px 0 0"></div>
<div class="a" style="left:515px;top:436.8px;width:146px;height:1.2px;background:#262626;"></div>
<div class="a" style="left:636px;top:438px;width:25px;height:34.5px;background:#2c2c2c;border-radius:0 0 5px 0"></div>
<div class="a" style="left:635.5px;top:438px;width:1px;height:34.5px;background:#262626;"></div>
<div class="t" style="left:520.0px;top:421.9px;font-size:7.75px;color:#c4c4c4;">Sample Gradient</div>
<svg style="left:652px;top:424.5px" width="5" height="3.5" viewBox="0 0 6 4"><path d="M0.5 0.8 L3 3.2 L5.5 0.8" fill="none" stroke="#bbb" stroke-width="1"/></svg>
<svg style="left:519.10px;top:445.10px" width="7.80" height="7.80"><circle cx="3.90" cy="3.90" r="2.90" fill="#f0a060"/><path d="M2.30 2.30 L5.50 5.50 M5.50 2.30 L2.30 5.50" stroke="rgba(255,255,255,.4)" stroke-width="0.9"/></svg>
<svg style="left:519.10px;top:458.60px" width="7.80" height="7.80"><circle cx="3.90" cy="3.90" r="2.90" fill="#86d6e6"/><path d="M2.30 2.30 L5.50 5.50 M5.50 2.30 L2.30 5.50" stroke="rgba(255,255,255,.4)" stroke-width="0.9"/></svg>
<div class="a" style="left:562px;top:444px;width:68px;height:10px;background:linear-gradient(90deg,rgba(110,65,65,.42),rgba(95,95,65,.38) 30%,rgba(65,95,90,.38) 55%,rgba(75,80,115,.42) 75%,rgba(105,70,90,.42)),repeating-conic-gradient(#373737 0 25%,#2d2d2d 0 50%) 0 0/4px 4px;"></div>
<div class="t" style="left:535.0px;top:445.4px;font-size:7.6px;color:#9a9a9a;">Gradient</div>
<div class="t" style="left:535.0px;top:459.0px;font-size:7.6px;color:#8a8a8a;">Time</div>
<div class="a" style="left:562px;top:456.5px;width:68px;height:11px;background:#2d2d2d;"></div>
<svg style="left:640px;top:445.0px" width="6" height="7" viewBox="0 0 6 7"><path d="M0.5 0.5 L5.5 3.5 L0.5 6.5 Z" fill="#6f6f6f"/></svg>
<div class="t" style="left:646.0px;top:445.6px;font-size:7.6px;color:#9a9a9a;">s</div>
<svg style="left:651.60px;top:445.10px" width="7.80" height="7.80"><circle cx="3.90" cy="3.90" r="2.90" fill="#dca8e8"/><path d="M2.30 2.30 L5.50 5.50 M5.50 2.30 L2.30 5.50" stroke="rgba(255,255,255,.4)" stroke-width="0.9"/></svg>
<div class="a" style="left:29px;top:62px;width:245px;height:470px;background:#2a2a2a;border-radius:6px;overflow:hidden">
<div class="a" style="left:0;top:0;width:245px;height:41px;background:#393939"></div>
<div class="a" style="left:0;top:41px;width:245px;height:1px;background:#202020"></div>
<div class="a" style="left:0;top:42px;width:245px;height:2px;background:#383838"></div>
</div>
<div class="t" style="left:35.8px;top:71.8px;font-size:13.2px;color:#cccccc;">RainbwDash</div>
<svg style="left:251.5px;top:79px" width="11" height="11"><path d="M5.5 0.5 V10.5 M0.5 5.5 H10.5" stroke="#cccccc" stroke-width="1.5"/></svg>
<svg style="left:34.5px;top:113.5px" width="9" height="6" viewBox="0 0 9 6"><path d="M1 1 L4.5 4.6 L8 1" fill="none" stroke="#c8c8c8" stroke-width="1.7"/></svg>
<div class="t" style="left:51.0px;top:110.9px;font-size:10.5px;color:#6a6a6a;">Emission</div>
<svg style="left:42.8px;top:137.5px" width="9" height="6" viewBox="0 0 9 6"><path d="M1 1 L4.5 4.6 L8 1" fill="none" stroke="#dcdcdc" stroke-width="1.7"/></svg>
<div class="a" style="left:56.7px;top:130px;width:103.49999999999999px;height:20px;border-radius:10px;background:#4d4d4d;box-shadow:0 0 0 1px #1f1f1f"></div>
<div class="a" style="left:64.3px;top:136.6px;width:7px;height:7px;border-radius:50%;background:#8fe22b"></div>
<div class="t" style="left:75.2px;top:134.7px;font-size:11.5px;color:#c6c6c6;">Cycle Duration</div>
<div class="t" style="right:777.4px;top:134.8px;font-size:10.9px;color:#808080;">float</div>
<div class="t" style="left:54.8px;top:159.9px;font-size:10.6px;color:#acacac;">Exposed</div>
<div class="a" style="left:128.5px;top:156px;width:13px;height:13.3px;background:#222;border:1px solid #1a1a1a;border-radius:2px"></div>
<svg style="left:128.5px;top:156px" width="13" height="13" viewBox="0 0 13 13"><path d="M3 6.8 L5.4 9.2 L10.2 3.8" fill="none" stroke="#e6e6e6" stroke-width="1.7"/></svg>
<div class="t" style="left:54.8px;top:177.8px;font-size:10.6px;color:#acacac;">Value</div>
<div class="a" style="left:128.5px;top:172px;width:137.5px;height:18.5px;background:#282828;"></div>
<div class="a" style="left:128.5px;top:172px;width:137.5px;height:1px;background:#161616;"></div>
<div class="t" style="left:132.6px;top:177.0px;font-size:11px;color:#d8d8d8;">1</div>
<div class="t" style="left:54.8px;top:196.5px;font-size:10.6px;color:#acacac;">Tooltip</div>
<div class="a" style="left:128.5px;top:192px;width:137.5px;height:18px;background:#282828;"></div>
<div class="t" style="left:54.8px;top:214.6px;font-size:10.6px;color:#acacac;">Range</div>
<div class="a" style="left:128.5px;top:211px;width:13px;height:13.3px;background:#222;border:1px solid #1a1a1a;border-radius:2px"></div>
<svg style="left:45px;top:243.8px" width="6" height="9" viewBox="0 0 6 9"><path d="M1 1 L4.6 4.5 L1 8" fill="none" stroke="#dcdcdc" stroke-width="1.7"/></svg>
<div class="a" style="left:57px;top:238px;width:87.19999999999999px;height:20px;border-radius:10px;background:#4d4d4d;box-shadow:0 0 0 1px #1f1f1f"></div>
<div class="a" style="left:64.6px;top:244.6px;width:7px;height:7px;border-radius:50%;background:#8fe22b"></div>
<div class="t" style="left:75.5px;top:242.9px;font-size:11.2px;color:#c6c6c6;">Spawn Rate</div>
<div class="t" style="right:777.4px;top:242.8px;font-size:10.9px;color:#808080;">float</div>
<svg style="left:45px;top:271.8px" width="6" height="9" viewBox="0 0 6 9"><path d="M1 1 L4.6 4.5 L1 8" fill="none" stroke="#dcdcdc" stroke-width="1.7"/></svg>
<div class="a" style="left:57px;top:266px;width:84.9px;height:20px;border-radius:10px;background:#4d4d4d;box-shadow:0 0 0 1px #1f1f1f"></div>
<div class="a" style="left:64.6px;top:272.6px;width:7px;height:7px;border-radius:50%;background:#8fe22b"></div>
<div class="t" style="left:75.5px;top:270.8px;font-size:11.3px;color:#c6c6c6;">Color Cycle</div>
<div class="t" style="right:777.4px;top:270.8px;font-size:10.9px;color:#808080;">Gradient</div>
<svg style="left:42.8px;top:301.5px" width="9" height="6" viewBox="0 0 9 6"><path d="M1 1 L4.5 4.6 L8 1" fill="none" stroke="#dcdcdc" stroke-width="1.7"/></svg>
<div class="a" style="left:57px;top:294px;width:107.80000000000001px;height:20px;border-radius:10px;background:#4d4d4d;box-shadow:0 0 0 1px #1f1f1f"></div>
<div class="a" style="left:64.6px;top:300.6px;width:7px;height:7px;border-radius:50%;background:#8fe22b"></div>
<div class="t" style="left:75.5px;top:298.9px;font-size:11.2px;color:#c6c6c6;">EmissionSphere</div>
<div class="t" style="right:777.4px;top:298.8px;font-size:10.9px;color:#808080;">Sphere</div>
<div class="t" style="left:54.8px;top:324.4px;font-size:10.6px;color:#acacac;">Exposed</div>
<div class="a" style="left:128.5px;top:320px;width:13px;height:13.3px;background:#222;border:1px solid #1a1a1a;border-radius:2px"></div>
<svg style="left:128.5px;top:320px" width="13" height="13" viewBox="0 0 13 13"><path d="M3 6.8 L5.4 9.2 L10.2 3.8" fill="none" stroke="#e6e6e6" stroke-width="1.7"/></svg>
<div class="t" style="left:54.8px;top:342.0px;font-size:10.6px;color:#acacac;">Value</div>
<div class="a" style="left:103.8px;top:340px;width:16px;height:10.7px;border:1px solid #8a8a8a;border-radius:5.5px"></div>
<div class="t" style="left:-188.2px;width:600px;text-align:center;top:342.3px;font-size:7.4px;color:#9a9a9a;">L</div>
<div class="t" style="left:63.5px;top:360.3px;font-size:10.6px;color:#acacac;">Center</div>
<div class="t" style="left:128.9px;top:359.5px;font-size:10px;color:#8a8a8a;">x</div>
<div class="a" style="left:135.9px;top:354.5px;width:39.099999999999994px;height:17.5px;background:#282828;"></div>
<div class="a" style="left:135.9px;top:354.5px;width:39.099999999999994px;height:1px;background:#161616;"></div>
<div class="t" style="left:138.9px;top:359.0px;font-size:11px;color:#d8d8d8;">0</div>
<div class="t" style="left:178.3px;top:359.5px;font-size:10px;color:#8a8a8a;">y</div>
<div class="a" style="left:186px;top:354.5px;width:34px;height:17.5px;background:#282828;"></div>
<div class="a" style="left:186px;top:354.5px;width:34px;height:1px;background:#161616;"></div>
<div class="t" style="left:189.0px;top:359.0px;font-size:11px;color:#d8d8d8;">0</div>
<div class="t" style="left:223.6px;top:359.5px;font-size:10px;color:#8a8a8a;">z</div>
<div class="a" style="left:231.5px;top:354.5px;width:34.10000000000002px;height:17.5px;background:#282828;"></div>
<div class="a" style="left:231.5px;top:354.5px;width:34.10000000000002px;height:1px;background:#161616;"></div>
<div class="t" style="left:234.5px;top:359.0px;font-size:11px;color:#d8d8d8;">0</div>
<div class="t" style="left:63.5px;top:377.3px;font-size:10.6px;color:#acacac;">Radius</div>
<div class="a" style="left:128.6px;top:372.7px;width:137.00000000000003px;height:17.80000000000001px;background:#282828;"></div>
<div class="a" style="left:128.6px;top:372.7px;width:137.00000000000003px;height:1px;background:#161616;"></div>
<div class="t" style="left:132.6px;top:377.0px;font-size:11px;color:#d8d8d8;">1</div>
<div class="t" style="left:54.8px;top:396.8px;font-size:10.6px;color:#acacac;">Tooltip</div>
<div class="a" style="left:128.5px;top:391.5px;width:137.5px;height:18px;background:#282828;"></div>
<div class="a" style="left:29px;top:416px;width:245px;height:1.2px;background:#3a3a3a;"></div>
<svg style="left:34.8px;top:425px" width="9" height="6" viewBox="0 0 9 6"><path d="M1 1 L4.5 4.6 L8 1" fill="none" stroke="#c8c8c8" stroke-width="1.7"/></svg>
<div class="t" style="left:50.3px;top:422.2px;font-size:10.8px;color:#6a6a6a;">Rendering</div>
<svg style="left:45px;top:446.8px" width="6" height="9" viewBox="0 0 6 9"><path d="M1 1 L4.6 4.5 L1 8" fill="none" stroke="#dcdcdc" stroke-width="1.7"/></svg>
<div class="a" style="left:56.7px;top:441px;width:65.6px;height:20px;border-radius:10px;background:#4d4d4d;box-shadow:0 0 0 1px #1f1f1f"></div>
<div class="a" style="left:64.3px;top:447.6px;width:7px;height:7px;border-radius:50%;background:#8fe22b"></div>
<div class="t" style="left:75.2px;top:445.7px;font-size:11.5px;color:#c6c6c6;">Texture</div>
<div class="t" style="right:777.4px;top:445.9px;font-size:11px;color:#808080;">Texture2D</div>
<svg style="left:45px;top:474.8px" width="6" height="9" viewBox="0 0 6 9"><path d="M1 1 L4.6 4.5 L1 8" fill="none" stroke="#dcdcdc" stroke-width="1.7"/></svg>
<div class="a" style="left:57px;top:469px;width:95.80000000000001px;height:20px;border-radius:10px;background:#4d4d4d;box-shadow:0 0 0 1px #1f1f1f"></div>
<div class="a" style="left:64.6px;top:475.6px;width:7px;height:7px;border-radius:50%;background:#8fe22b"></div>
<div class="t" style="left:75.5px;top:473.7px;font-size:11.4px;color:#c6c6c6;">Size Over Life</div>
<div class="t" style="right:777.4px;top:474.0px;font-size:10.85px;color:#808080;">AnimationCurve</div>
<svg style="left:45px;top:502.8px" width="6" height="9" viewBox="0 0 6 9"><path d="M1 1 L4.6 4.5 L1 8" fill="none" stroke="#dcdcdc" stroke-width="1.7"/></svg>
<div class="a" style="left:57px;top:497px;width:104px;height:20px;border-radius:10px;background:#4d4d4d;box-shadow:0 0 0 1px #1f1f1f"></div>
<div class="a" style="left:64.6px;top:503.6px;width:7px;height:7px;border-radius:50%;background:#8fe22b"></div>
<div class="t" style="left:75.5px;top:501.7px;font-size:11.4px;color:#c6c6c6;">Color Over Life</div>
<div class="t" style="right:777.4px;top:502.0px;font-size:10.9px;color:#808080;">Gradient</div>
<div class="a" style="left:28px;top:553.4px;width:279px;height:269.6px;background:#2a2a2a;border-radius:6px;overflow:hidden">
<div class="a" style="left:0;top:0;width:279px;height:48.3px;background:#393939"></div>
<div class="a" style="left:0;top:48.3px;width:279px;height:1px;background:#222"></div>
</div>
<div class="t" style="left:30.2px;top:559.5px;font-size:13.6px;color:#d4d4d4;">Target visual effect GameObject</div>
<div class="t" style="left:30.5px;top:576.0px;font-size:10.85px;color:#5e5e5e;">Select a visual effect gameobject in the scenes and</div>
<div class="t" style="left:30.5px;top:589.0px;font-size:10.85px;color:#5e5e5e;">attach for additionnal control.</div>
<div class="a" style="left:31px;top:612px;width:60px;height:18.600000000000023px;background:#585858;border-radius:2px;box-shadow:0 1px 0 #1e1e1e"></div>
<div class="t" style="left:-239.0px;width:600px;text-align:center;top:616.2px;font-size:11px;color:#d2d2d2;">Detach</div>
<div class="t" style="left:95.0px;top:612.7px;font-size:10.6px;color:#d6d6d6;">New VFX</div>
<div class="a" style="left:244px;top:612px;width:59.5px;height:19px;background:#585858;border-radius:2px;box-shadow:0 1px 0 #1e1e1e"></div>
<div class="t" style="left:-26.2px;width:600px;text-align:center;top:616.2px;font-size:11px;color:#d2d2d2;">select</div>
<div class="a" style="left:28px;top:641px;width:279px;height:1px;background:#222;"></div>
<div class="a" style="left:31px;top:651px;width:64px;height:23.299999999999955px;background:#585858;border-radius:2px;box-shadow:0 1px 0 #1e1e1e"></div>
<div class="a" style="left:101px;top:651px;width:64px;height:23.299999999999955px;background:#585858;border-radius:2px;box-shadow:0 1px 0 #1e1e1e"></div>
<div class="a" style="left:170.6px;top:651px;width:63.20000000000002px;height:23.299999999999955px;background:#585858;border-radius:2px;box-shadow:0 1px 0 #1e1e1e"></div>
<div class="a" style="left:240px;top:651px;width:63.89999999999998px;height:23.299999999999955px;background:#585858;border-radius:2px;box-shadow:0 1px 0 #1e1e1e"></div>
<div class="a" style="left:59.3px;top:657.3px;width:7.5px;height:8px;background:#c8c8c8;border-radius:0.5px"></div>
<div class="a" style="left:129.7px;top:657.2px;width:2.6px;height:8px;background:#c8c8c8;"></div>
<div class="a" style="left:134.5px;top:657.2px;width:2.6px;height:8px;background:#c8c8c8;"></div>
<svg style="left:196.5px;top:657px" width="10" height="9" viewBox="0 0 10 9"><path d="M0.5 0.3 L5.6 4.5 L0.5 8.7 Z" fill="#c8c8c8"/><rect x="6.5" y="0.3" width="2.4" height="8.4" fill="#c8c8c8"/></svg>
<svg style="left:265.5px;top:656.5px" width="12" height="10" viewBox="0 0 12 10"><path d="M1 8.5 V4.5 Q1 3 2.5 3 H8" fill="none" stroke="#c8c8c8" stroke-width="1.8"/><path d="M7.5 0 L11.5 3 L7.5 6 Z" fill="#c8c8c8"/><path d="M1.5 7.5 H9" stroke="#c8c8c8" stroke-width="1.8"/></svg>
<div class="t" style="left:29.7px;top:682.5px;font-size:10.5px;color:#cfcfcf;">Play Rate</div>
<div class="a" style="left:80px;top:687.3px;width:90.6px;height:1.5px;background:#7a7a7a;"></div>
<div class="a" style="left:116.7px;top:683.1px;width:10px;height:10px;border-radius:50%;background:#a8a8a8"></div>
<div class="a" style="left:178px;top:677.1px;width:80px;height:17px;background:#282828;"></div>
<div class="a" style="left:178px;top:677.1px;width:80px;height:1px;background:#141414;"></div>
<div class="t" style="left:181.6px;top:680.7px;font-size:11px;color:#d6d6d6;">100</div>
<div class="a" style="left:264px;top:678.5px;width:39.4px;height:14.3px;background:#5a5a5a;border-radius:2px;box-shadow:inset 3px 0 0 #3f3f3f"></div>
<div class="t" style="left:273.0px;top:680.7px;font-size:11px;color:#d0d0d0;">Set</div>
<div class="a" style="left:293.3px;top:684.5px;width:0;height:0;border-left:2.5px solid transparent;border-right:2.5px solid transparent;border-top:3px solid #ccc"></div>
<div class="a" style="left:28px;top:704.3px;width:279px;height:1px;background:#222;"></div>
<div class="t" style="left:29.5px;top:715.9px;font-size:10.2px;color:#cfcfcf;">Events</div>
<div class="a" style="left:31px;top:727px;width:134px;height:18.799999999999955px;background:#585858;border-radius:2px;box-shadow:0 1px 0 #1e1e1e"></div>
<div class="t" style="left:-202.0px;width:600px;text-align:center;top:731.0px;font-size:11px;color:#d2d2d2;">OnPlay</div>
<div class="a" style="left:171px;top:727px;width:133px;height:18.799999999999955px;background:#585858;border-radius:2px;box-shadow:0 1px 0 #1e1e1e"></div>
<div class="t" style="left:-62.5px;width:600px;text-align:center;top:731.0px;font-size:11px;color:#d2d2d2;">OnStop</div>
</body></html>
